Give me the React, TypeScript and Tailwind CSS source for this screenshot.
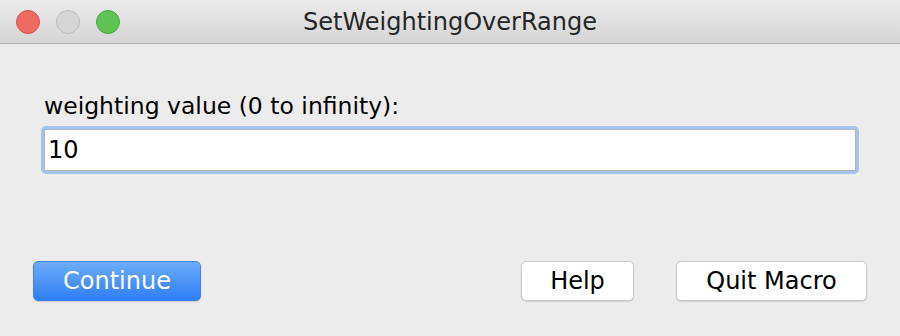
export default function App() {
  return (
    <div className="w-[900px] h-[336px] bg-[#ececec] flex flex-col overflow-hidden" style={{ fontFamily: '"DejaVu Sans", Verdana, sans-serif' }}>
      {/* title bar */}
      <div className="relative h-[44px] shrink-0 flex items-center justify-center bg-gradient-to-b from-[#ebebeb] to-[#d5d5d5] border-b border-[#b1b1b1]">
        <div className="absolute left-[16px] top-[10px] flex gap-[16px]">
          <span className="w-[24px] h-[24px] rounded-full bg-[#ee6b60] border border-[#d5534a]" />
          <span className="w-[24px] h-[24px] rounded-full bg-[#d6d6d6] border border-[#bcbcbc]" />
          <span className="w-[24px] h-[24px] rounded-full bg-[#5fc453] border border-[#4aa63f]" />
        </div>
        <span className="text-[24px] leading-[28px] text-[#262626]">SetWeightingOverRange</span>
      </div>

      {/* body */}
      <div className="flex-1 flex flex-col px-[33px]">
        <div className="pl-[11px] pt-[48px] text-[23.5px] leading-[28px] text-black">weighting value (0 to infinity):</div>
        <div className="ml-[8px] mt-[6px] w-[818px] h-[48px] rounded-[5px] bg-[#a1c4f0] p-[3px]">
          <div className="h-full bg-white border border-[#b4b4b4] flex items-center pl-[3px] text-[24px] leading-[28px] text-black">10</div>
        </div>

        <div className="mt-[87px] flex items-center">
          <button className="w-[168px] h-[40px] rounded-[5px] bg-gradient-to-b from-[#6dacf8] to-[#2d7df6] border border-[#3b84f0] text-white text-[24px] leading-[28px] shadow-[0_1px_1px_rgba(0,0,0,0.15)]">Continue</button>
          <div className="flex-1" />
          <button className="w-[113px] h-[40px] rounded-[5px] bg-white border border-[#c8c8c8] text-black text-[24px] leading-[28px] shadow-[0_1px_1px_rgba(0,0,0,0.12)]">Help</button>
          <button className="ml-[42px] w-[191px] h-[40px] rounded-[5px] bg-white border border-[#c8c8c8] text-black text-[24px] leading-[28px] shadow-[0_1px_1px_rgba(0,0,0,0.12)]">Quit Macro</button>
        </div>
      </div>
    </div>
  );
}
